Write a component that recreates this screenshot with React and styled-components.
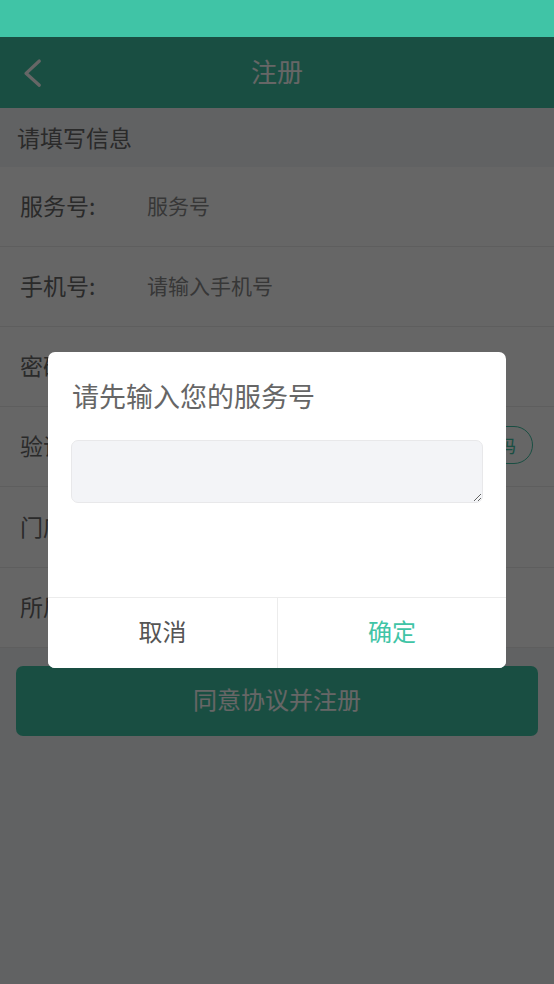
import React from "react";
import styled, { createGlobalStyle } from "styled-components";

const teal = "#40c4a6";
const pageBg = "#f3f4f7";

const Global = createGlobalStyle`
  html, body { margin: 0; padding: 0; }
  body {
    background: ${pageBg};
    font-family: "Noto Sans CJK SC", "Noto Sans", sans-serif;
  }
  * { box-sizing: border-box; }
`;

const Page = styled.div`
  position: relative;
  min-height: 100vh;
  background: ${pageBg};
  display: flex;
  flex-direction: column;
`;

const StatusBar = styled.div`
  position: relative;
  z-index: 3;
  height: 37px;
  background: ${teal};
  flex-shrink: 0;
`;

const NavBar = styled.header`
  height: 71px;
  background: ${teal};
  display: grid;
  grid-template-columns: 80px 1fr 80px;
  align-items: center;
`;

const BackButton = styled.button`
  border: none;
  background: transparent;
  padding: 0 0 0 22px;
  height: 100%;
  display: flex;
  align-items: center;
  cursor: pointer;
`;

const NavTitle = styled.h1`
  margin: 0 0 4px;
  text-align: center;
  font-size: 26px;
  font-weight: 400;
  color: #fff;
`;

const SectionHeader = styled.div`
  height: 58.7px;
  display: flex;
  align-items: center;
  padding-left: 17px;
  font-size: 23px;
  color: #6a6a6a;
`;

const Form = styled.div`
  background: #fff;
`;

const Row = styled.div`
  height: 80.2px;
  display: flex;
  align-items: center;
  padding: 0 21px 3px 20px;
  border-bottom: 1px solid #ececec;
`;

const Label = styled.span`
  width: 127px;
  flex-shrink: 0;
  font-size: 23px;
  color: #6a6a6a;
`;

const Value = styled.span`
  flex: 1;
  font-size: 21px;
  color: #8a8a8a;
`;

const CodeButton = styled.button`
  height: 38px;
  padding: 0 16px;
  border: 1.5px solid ${teal};
  border-radius: 19px;
  background: #fff;
  color: ${teal};
  font-family: inherit;
  font-size: 18px;
`;

const Submit = styled.button`
  margin: 18px 16px 0;
  height: 70px;
  padding-bottom: 5px;
  border: none;
  border-radius: 7px;
  background: ${teal};
  color: #fff;
  font-family: inherit;
  font-size: 24px;
`;

const Mask = styled.div`
  position: absolute;
  z-index: 2;
  top: 37px;
  left: 0;
  right: 0;
  bottom: 0;
  background: rgba(0, 0, 0, 0.6);
  display: flex;
  align-items: center;
  justify-content: center;
`;

const Dialog = styled.div`
  width: 458px;
  margin-top: -1px;
  background: #fff;
  border-radius: 7px;
  overflow: hidden;
`;

const DialogBody = styled.div`
  padding: 24px 23px 94px 23px;
`;

const DialogTitle = styled.div`
  height: 40px;
  line-height: 40px;
  font-size: 27px;
  color: #666;
  padding-left: 1px;
  margin-bottom: 24px;
`;

const TextArea = styled.textarea`
  display: block;
  width: 100%;
  height: 63px;
  border: 1px solid #e8e8ea;
  border-radius: 7px;
  background: ${pageBg};
  outline: none;
  font-family: inherit;
  font-size: 20px;
  padding: 10px 14px;
`;

const DialogFooter = styled.div`
  display: grid;
  grid-template-columns: 1fr 1fr;
  height: 71px;
  border-top: 1px solid #ececec;
`;

const DialogButton = styled.button`
  border: none;
  padding: 0 0 5px;
  background: #fff;
  font-family: inherit;
  font-size: 24px;
  color: ${(p) => (p.$primary ? teal : "#555")};
  border-left: ${(p) => (p.$primary ? "1px solid #ececec" : "none")};
`;

const rows = [
  { label: "服务号:", value: "服务号" },
  { label: "手机号:", value: "请输入手机号" },
  { label: "密码:", value: "请输入密码" },
  { label: "验证码:", value: "请输入验证码", code: true },
  { label: "门店名称:", value: "请输入门店名称" },
  { label: "所属区域:", value: "请选择所属区域" },
];

export default function App() {
  return (
    <>
      <Global />
      <Page>
        <StatusBar />
        <NavBar>
          <BackButton aria-label="返回">
            <svg width="20" height="30" viewBox="0 0 20 30">
              <polyline
                points="17.3,3 4,15.3 17.3,27.3"
                fill="none"
                stroke="#fff"
                strokeWidth="3.2"
                strokeLinecap="round"
                strokeLinejoin="round"
              />
            </svg>
          </BackButton>
          <NavTitle>注册</NavTitle>
          <span />
        </NavBar>
        <SectionHeader>请填写信息</SectionHeader>
        <Form>
          {rows.map((r) => (
            <Row key={r.label}>
              <Label>{r.label}</Label>
              <Value>{r.value}</Value>
              {r.code && <CodeButton>获取验证码</CodeButton>}
            </Row>
          ))}
        </Form>
        <Submit>同意协议并注册</Submit>
        <Mask>
          <Dialog>
            <DialogBody>
              <DialogTitle>请先输入您的服务号</DialogTitle>
              <TextArea />
            </DialogBody>
            <DialogFooter>
              <DialogButton>取消</DialogButton>
              <DialogButton $primary>确定</DialogButton>
            </DialogFooter>
          </Dialog>
        </Mask>
      </Page>
    </>
  );
}
